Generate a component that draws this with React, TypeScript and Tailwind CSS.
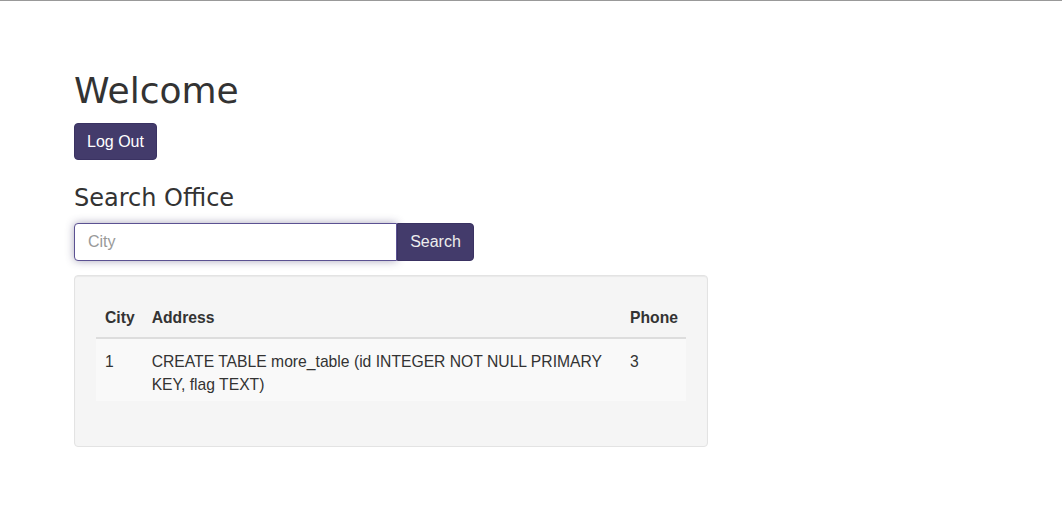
import React from "react";

const offices = [
  {
    city: "1",
    address: "CREATE TABLE more_table (id INTEGER NOT NULL PRIMARY KEY, flag TEXT)",
    phone: "3",
  },
];

export default function App() {
  return (
    <div className="min-h-[514px] w-full border-t border-[#999] bg-white font-['Liberation_Sans',Arial,sans-serif] text-[15.7px] leading-[22.86px] text-[#333]">
      <div className="pl-[74px]">
        <h1 className="mt-[70px] mb-[12px] font-['DejaVu_Sans',sans-serif] text-[36px] leading-[40px] font-normal">
          Welcome
        </h1>
        <button className="rounded-[4px] border border-[#3a3262] bg-[#433b6b] px-3 py-[6px] text-[16px] leading-[23px] text-white">
          Log Out
        </button>

        <h3 className="mt-[25px] mb-[12px] font-['DejaVu_Sans',sans-serif] text-[24px] leading-[26px] font-normal">
          Search Office
        </h3>
        <div className="flex">
          <input
            type="text"
            placeholder="City"
            className="h-[38px] w-[323px] rounded-l-[4px] border border-[#5b5192] bg-white px-[13px] text-[16px] text-[#555] shadow-[0_0_8px_rgba(67,59,107,0.45)] outline-none placeholder:text-[#999]"
          />
          <button className="h-[38px] w-[77px] rounded-r-[4px] border border-[#3a3262] bg-[#433b6b] text-[16px] text-[#eee]">
            Search
          </button>
        </div>

        <div className="mt-[14px] w-[634px] rounded-[4px] border border-[#e3e3e3] bg-[#f5f5f5] px-[21px] pt-[21px] pb-[24px] shadow-[inset_0_1px_1px_rgba(0,0,0,0.05)]">
          <table className="mb-[21px] w-full border-collapse text-left">
            <thead>
              <tr>
                <th className="border-b-2 border-[#ddd] px-[9px] pt-[10px] pb-[7px] align-bottom font-bold">City</th>
                <th className="border-b-2 border-[#ddd] px-2 pt-[10px] pb-[7px] align-bottom font-bold">Address</th>
                <th className="border-b-2 border-[#ddd] px-2 pt-[10px] pb-[7px] align-bottom font-bold">Phone</th>
              </tr>
            </thead>
            <tbody>
              {offices.map((o) => (
                <tr key={o.city} className="bg-[#f9f9f9]">
                  <td className="px-[9px] pt-[12px] pb-[4px] align-top">{o.city}</td>
                  <td className="px-2 pt-[12px] pb-[4px] align-top">{o.address}</td>
                  <td className="px-2 pt-[12px] pb-[4px] align-top">{o.phone}</td>
                </tr>
              ))}
            </tbody>
          </table>
        </div>
      </div>
    </div>
  );
}
